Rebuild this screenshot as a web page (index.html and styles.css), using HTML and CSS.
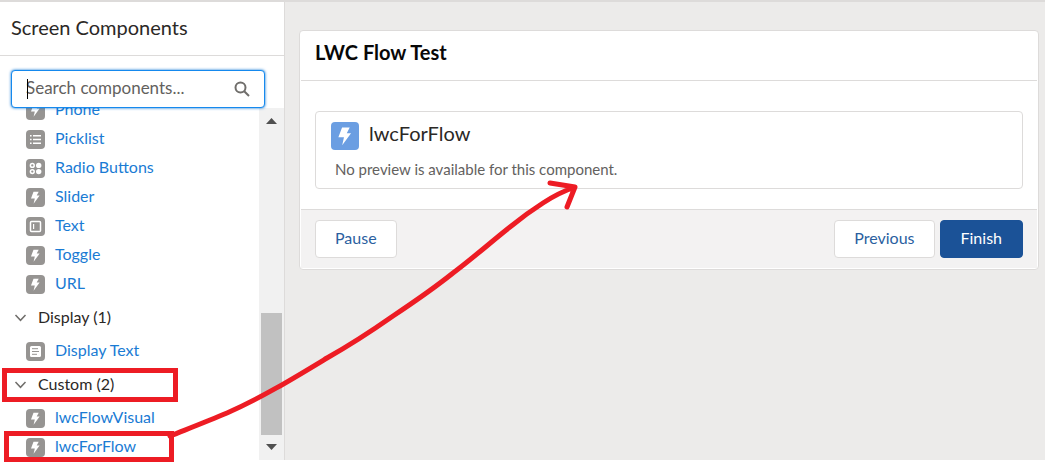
FILE: index.html
```html
<!DOCTYPE html>
<html lang="en">
<head>
<meta charset="utf-8">
<title>Flow Builder - Screen Components</title>
<link rel="stylesheet" href="styles.css">
</head>
<body>
<svg class="symbols" aria-hidden="true">
  <symbol id="bolt" viewBox="0 0 19 19"><path d="M7.500 3.700h5.200l-2 3.900h2.900L7.600 15.700l1.200-5.300H5z"/></symbol>
  <symbol id="list" viewBox="0 0 19 19"><path d="M4 5h1.6v1.6H4zM7 5h8v1.6H7zM4 8.7h1.6v1.6H4zM7 8.7h8v1.6H7zM4 12.4h1.6V14H4zM7 12.4h8V14H7z"/></symbol>
  <symbol id="radio" viewBox="0 0 19 19"><circle cx="12.7" cy="6.4" r="2.7"/><circle cx="12.7" cy="12.6" r="2.7"/><circle class="ring" cx="6.3" cy="6.4" r="1.9"/><circle class="ring" cx="6.3" cy="12.6" r="1.9"/></symbol>
  <symbol id="textbox" viewBox="0 0 19 19"><rect class="ring" x="4.5" y="4.5" width="10" height="10" rx="1"/><path d="M7 7h1.2v5H7z"/></symbol>
  <symbol id="doc" viewBox="0 0 19 19"><path d="M5.5 4h8q1.5 0 1.5 1.5v8q0 1.500-1.500 1.500h-8Q4 15 4 13.500v-8Q4 4 5.500 4z"/><path class="rule" d="M6 6.700h6M6 9.500h7M6 12.300h5"/></symbol>
  <symbol id="chevron" viewBox="0 0 13 13"><path d="M1.500 4 6.500 9.300 11.500 4"/></symbol>
</svg>
<div class="app">
  <aside class="sidebar">
    <h1 class="sidebar-title">Screen Components</h1>
    <label class="search">
      <span class="caret"></span>
      <input class="search-input" type="text" placeholder="Search components..." aria-label="Search components">
      <svg class="search-icon" viewBox="0 0 16 16"><circle cx="6.500" cy="6.500" r="5"/><path d="M10.200 10.200 15 15"/></svg>
    </label>
    <div class="scroller">
      <nav class="list">
        <a class="item" href="#"><svg class="icon"><use href="#bolt"/></svg>Phone</a>
        <a class="item" href="#"><svg class="icon"><use href="#list"/></svg>Picklist</a>
        <a class="item" href="#"><svg class="icon"><use href="#radio"/></svg>Radio Buttons</a>
        <a class="item" href="#"><svg class="icon"><use href="#bolt"/></svg>Slider</a>
        <a class="item" href="#"><svg class="icon"><use href="#textbox"/></svg>Text</a>
        <a class="item" href="#"><svg class="icon"><use href="#bolt"/></svg>Toggle</a>
        <a class="item" href="#"><svg class="icon"><use href="#bolt"/></svg>URL</a>
        <button class="group" type="button"><svg class="chevron"><use href="#chevron"/></svg>Display (1)</button>
        <a class="item" href="#"><svg class="icon"><use href="#doc"/></svg>Display Text</a>
        <button class="group" type="button"><svg class="chevron"><use href="#chevron"/></svg>Custom (2)</button>
        <a class="item" href="#"><svg class="icon"><use href="#bolt"/></svg>lwcFlowVisual</a>
        <a class="item" href="#"><svg class="icon"><use href="#bolt"/></svg>lwcForFlow</a>
      </nav>
      <div class="scrollbar">
        <svg class="arrow" viewBox="0 0 11 6"><path d="M0 6 5.500 0 11 6z"/></svg>
        <div class="thumb"></div>
        <svg class="arrow" viewBox="0 0 11 6"><path d="M0 0 5.500 6 11 0z"/></svg>
      </div>
    </div>
  </aside>
  <main class="canvas">
    <section class="card">
      <h2 class="card-title">LWC Flow Test</h2>
      <div class="card-body">
        <div class="preview">
          <div class="preview-head"><svg class="icon icon-large" viewBox="0 0 19 19"><use href="#bolt"/></svg><h3 class="preview-title">lwcForFlow</h3></div>
          <p class="preview-note">No preview is available for this component.</p>
        </div>
      </div>
      <footer class="card-footer">
        <button class="button" type="button">Pause</button>
        <div class="actions">
          <button class="button" type="button">Previous</button>
          <button class="button primary" type="button">Finish</button>
        </div>
      </footer>
    </section>
  </main>
</div>
<svg class="annotation" aria-hidden="true">
  <rect x="4.500" y="370.500" width="171" height="29"/>
  <rect x="6.500" y="433.500" width="165" height="26"/>
  <path class="stroke" d="M170 436C190 428 208 421 227 413C263 397 294 378 327 358C350 345 373 330 393 316C414 302 433 289 453 273C473 258 491 242 510 227C521 218 532 210 543 203Q558 193 575 187M550 183 575 187 567 207"/>
</svg>
</body>
</html>
```
FILE: styles.css
```css
* { box-sizing: border-box; }
body {
  margin: 0;
  background: #fff;
  color: #2b2826;
  font: 16px/24px Lato, "Open Sans", sans-serif;
}
h1, h2, h3, p { margin: 0; font-weight: 400; }
button, input { font: inherit; }
.symbols { display: none; }
.app {
  display: flex;
  height: calc(100vh - 3px);
  border-top: 2px solid #dddbda;
  background: #ecebea;
}
.sidebar {
  display: flex;
  flex-direction: column;
  flex: none;
  width: 285px;
  background: #fff;
  border-right: 1px solid #dddbda;
}
.sidebar-title {
  padding: 11px 11px 14px;
  border-bottom: 1px solid #dddbda;
  font-size: 20px;
  line-height: 28px;
}
.search {
  position: relative;
  z-index: 1;
  display: flex;
  align-items: center;
  flex: none;
  height: 38px;
  margin: 14px 19px 0 11px;
  padding: 0 14px;
  background: #fff;
  border: 1px solid #1589ee;
  border-radius: 4px;
  box-shadow: 0 0 3px #0070d2;
}
.search-input {
  flex: 1;
  min-width: 0;
  padding: 0 0 2px;
  border: 0;
  outline: 0;
  background: none;
  font-size: 17px;
}
.search-input::placeholder { color: #63615e; opacity: 1; }
.caret {
  position: absolute;
  left: 15px;
  top: 8px;
  width: 1px;
  height: 20px;
  background: #000;
}
.search-icon {
  width: 16px;
  height: 16px;
  fill: none;
  stroke: #706e6b;
  stroke-width: 2;
}
.scroller {
  display: flex;
  flex: 1;
  min-height: 0;
  overflow: hidden;
}
.list {
  display: flex;
  flex-direction: column;
  flex: 1;
  margin-top: -12px;
}
.item {
  display: flex;
  align-items: flex-start;
  flex: none;
  gap: 10px;
  height: 29px;
  padding: 5px 0 0 26px;
  color: #1a7bd4;
  line-height: 16px;
  text-decoration: none;
}
.icon {
  flex: none;
  width: 19px;
  height: 19px;
  border-radius: 4px;
  background: #969492;
  fill: #fff;
}
.ring { fill: none; stroke: #fff; stroke-width: 1.5px; }
.rule { fill: none; stroke: #969492; stroke-width: 1px; }
.group {
  display: flex;
  align-items: center;
  flex: none;
  gap: 11px;
  height: 38px;
  padding: 0 14px 2px;
  border: 0;
  background: none;
  color: #2b2826;
}
.chevron {
  width: 13px;
  height: 13px;
  fill: none;
  stroke: #706e6b;
  stroke-width: 1.5px;
}
.scrollbar {
  display: flex;
  flex-direction: column;
  align-items: center;
  width: 25px;
  padding: 10px 2px;
  background: #f1f1f1;
}
.arrow { flex: none; width: 11px; height: 6px; fill: #505050; }
.thumb {
  width: 100%;
  height: 122px;
  margin: auto 0 9px;
  background: #c1c1c1;
}
.canvas { flex: 1; padding: 28px 6px 0 14px; }
.card {
  padding: 1px;
  background: #fff;
  border: 1px solid #dddbda;
  border-radius: 4px;
}
.card-title {
  padding: 8px 14px 16px;
  border-bottom: 1px solid #dddbda;
  color: #080707;
  font-size: 20px;
  font-weight: 700;
}
.card-body { padding: 30px 14px 20px; }
.preview {
  padding: 10px 15px 7px;
  border: 1px solid #dddbda;
  border-radius: 4px;
}
.preview-head { display: flex; gap: 10px; }
.icon-large { width: 28px; height: 28px; background: #6b9ee2; }
.preview-title { font-size: 20px; line-height: 22px; }
.preview-note {
  padding: 7px 4px 0;
  color: #63615e;
  font-size: 15px;
}
.card-footer {
  display: flex;
  justify-content: space-between;
  padding: 10px 14px;
  border-top: 1px solid #dddbda;
  background: #f3f2f2;
}
.actions { display: flex; gap: 5px; }
.button {
  height: 38px;
  padding: 0 19px 2px;
  border: 1px solid #dddbda;
  border-radius: 4px;
  background: #fff;
  color: #2b5f9f;
}
.primary { padding: 0 20px 2px; border-color: #1b5297; background: #1b5297; color: #fff; }
.annotation {
  position: absolute;
  inset: 0;
  width: 100%;
  height: 100%;
  fill: none;
  stroke: #ed1c24;
  stroke-width: 5px;
  pointer-events: none;
}
.stroke { stroke-linecap: round; stroke-linejoin: round; }
```
